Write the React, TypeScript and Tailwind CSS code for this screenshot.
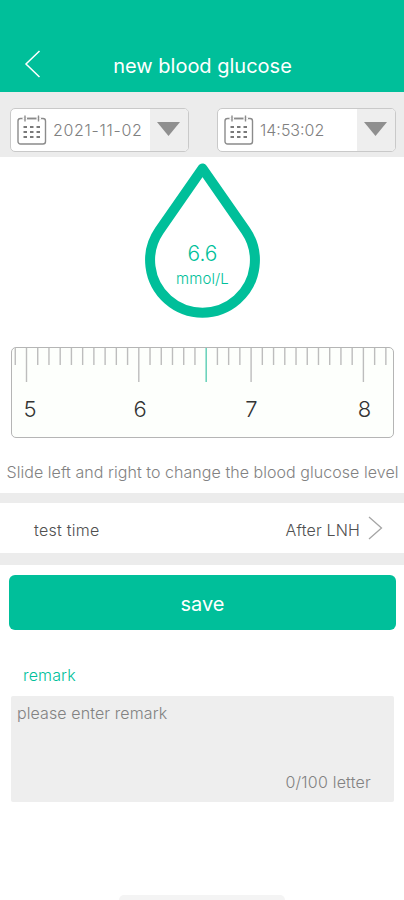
import type { ReactNode } from "react";

const FIRST_TICK = 49; // tenths of mmol/L
const LAST_TICK = 82;
const TICK_GAP = 11.23;

const READING = 66;

const SCALE_LABELS = [
  { text: "5", x: 18 },
  { text: "6", x: 128 },
  { text: "7", x: 239.5 },
  { text: "8", x: 352.5 },
];

function CalendarIcon() {
  return (
    <svg width="30" height="30" viewBox="0 0 30 30" fill="none">
      <rect
        x="1"
        y="3.5"
        width="27.5"
        height="25.5"
        rx="2.5"
        stroke="#8b8b8b"
        strokeWidth="1.4"
      />
      <path d="M5.5 3.5h5M19 3.5h5" stroke="#fff" strokeWidth="2" />
      <path
        d="M8 0.5v6M21.5 0.5v6M10 3.5h9.5"
        stroke="#8b8b8b"
        strokeWidth="1.4"
      />
      {[12, 17, 22].map((y) => (
        <path
          key={y}
          d={`M6.5 ${y}h3.5M13 ${y}h3.5M19.5 ${y}h3.5`}
          stroke="#7a7a7a"
          strokeWidth="2"
        />
      ))}
    </svg>
  );
}

function PickerField({ children }: { children: ReactNode }) {
  return (
    <button className="flex h-[44px] w-[179px] items-stretch overflow-hidden rounded-[5px] border border-[#c9c9c9] bg-white">
      <span className="flex flex-1 items-center pl-[6px]">
        <span className="pb-px">
          <CalendarIcon />
        </span>
        {children}
      </span>
      <span className="flex w-[38px] items-center justify-center bg-[#eeeeee] pr-[2px] pb-[3px]">
        <svg width="23" height="14" viewBox="0 0 23 14">
          <path d="M0 0h23L11.5 14z" fill="#8f8f8f" />
        </svg>
      </span>
    </button>
  );
}

function GlucoseDrop() {
  return (
    <div className="relative mx-auto h-[155px] w-[116px]">
      <svg width="116" height="155" viewBox="0 0 116 155" fill="none">
        <path
          d="M58.5 5.5 L15.3 67.6 A52.4 52.4 0 1 0 101.7 67.6 Z"
          stroke="#00bf9a"
          strokeWidth="10"
          strokeLinejoin="round"
        />
      </svg>
      <div className="absolute inset-x-0 top-[79px] pl-px text-center text-[#00bf9a]">
        <p className="text-[21px] leading-6 font-light">6.6</p>
        <p className="text-[15px] leading-[25px] font-light tracking-[0.1px]">
          mmol/L
        </p>
      </div>
    </div>
  );
}

function Ruler() {
  const ticks: number[] = [];
  for (let t = FIRST_TICK; t <= LAST_TICK; t++) ticks.push(t);

  return (
    <div className="mr-[10px] ml-[11px] h-[91px] overflow-hidden rounded-[5px] border border-[#b5b5b5] bg-[#fdfffc]">
      <svg width="381" height="89" viewBox="0 0 381 89">
        {ticks.map((t) => {
          const x = 14.5 + (t - 50) * TICK_GAP;
          const long = t % 10 === 0 || t === READING;
          return (
            <line
              key={t}
              x1={x}
              x2={x}
              y1="0"
              y2={long ? 34 : 17}
              stroke={t === READING ? "#59cdb3" : "#bdbdbd"}
              strokeWidth="1.4"
            />
          );
        })}
        {SCALE_LABELS.map((l) => (
          <text
            key={l.text}
            x={l.x}
            y="69"
            textAnchor="middle"
            fontSize="22"
            fontWeight="300"
            fill="#333"
          >
            {l.text}
          </text>
        ))}
      </svg>
    </div>
  );
}

export default function App() {
  return (
    <div className="flex h-[900px] w-[404px] flex-col overflow-hidden bg-white font-['Inter',sans-serif] font-light">
      {/* Header */}
      <header className="grid h-[92px] shrink-0 grid-cols-[64px_1fr_64px] items-center bg-[#00bf9a] pt-[39px] text-white">
        <svg
          className="mb-[3px] ml-6"
          width="17"
          height="28"
          viewBox="0 0 17 28"
          fill="none"
        >
          <path d="M15.5 1L2 14l13.5 13" stroke="#fff" strokeWidth="1.5" />
        </svg>
        <h1 className="pl-px text-center text-[20px] leading-7 font-normal">
          new blood glucose
        </h1>
      </header>

      {/* Date and time */}
      <div className="flex h-[65px] shrink-0 justify-between bg-[#ececec] pt-[16px] pr-[8px] pl-[10px]">
        <PickerField>
          <span className="ml-[6px] text-[16px] tracking-[0.7px] whitespace-nowrap text-[#808080]">
            2021-11-02
          </span>
        </PickerField>
        <PickerField>
          <span className="ml-[6px] text-[16px] text-[#808080]">14:53:02</span>
        </PickerField>
      </div>

      {/* Reading */}
      <section className="h-[336px] shrink-0 pt-[6px]">
        <GlucoseDrop />
        <div className="h-[29px]" />
        <Ruler />
        <p className="mt-[22px] pl-px text-center text-[16px] leading-6 tracking-[0.05px] whitespace-nowrap text-[#828282]">
          Slide left and right to change the blood glucose level
        </p>
      </section>

      {/* Test time */}
      <section className="flex h-[72px] shrink-0 items-center border-t-10 border-b-12 border-[#ececec] pr-[21px] pl-[34px] text-[16px] text-[#505050]">
        <span className="flex-1 pt-[3px] tracking-[0.25px]">test time</span>
        <span className="pt-[3px] tracking-[0.15px]">After LNH</span>
        <svg
          className="ml-[8px]"
          width="15"
          height="24"
          viewBox="0 0 15 24"
          fill="none"
        >
          <path d="M1 1l12.5 11L1 23" stroke="#a5a5a5" strokeWidth="1.3" />
        </svg>
      </section>

      <button className="mt-[10px] mr-[8px] ml-[9px] h-[55px] shrink-0 rounded-[6px] bg-[#00bf9a] pt-[3px] text-[20px] font-normal text-white">
        save
      </button>

      {/* Remark */}
      <section className="mt-[33px] mr-[10px] ml-[11px]">
        <h2 className="pl-[12px] text-[16px] leading-6 tracking-[0.15px] text-[#00bf9a]">
          remark
        </h2>
        <div className="mt-[9px] flex h-[106px] flex-col justify-between rounded-[2px] bg-[#eeeeee] px-[6px] pt-[5px] pb-[8px] text-[16px] leading-6 text-[#828282]">
          <p className="tracking-[0.1px]">please enter remark</p>
          <p className="pr-[17px] text-right tracking-[0.2px]">0/100 letter</p>
        </div>
      </section>

      <div className="mx-auto mt-auto h-[5px] w-[166px] rounded-t-full bg-[#f4f4f4]" />
    </div>
  );
}
